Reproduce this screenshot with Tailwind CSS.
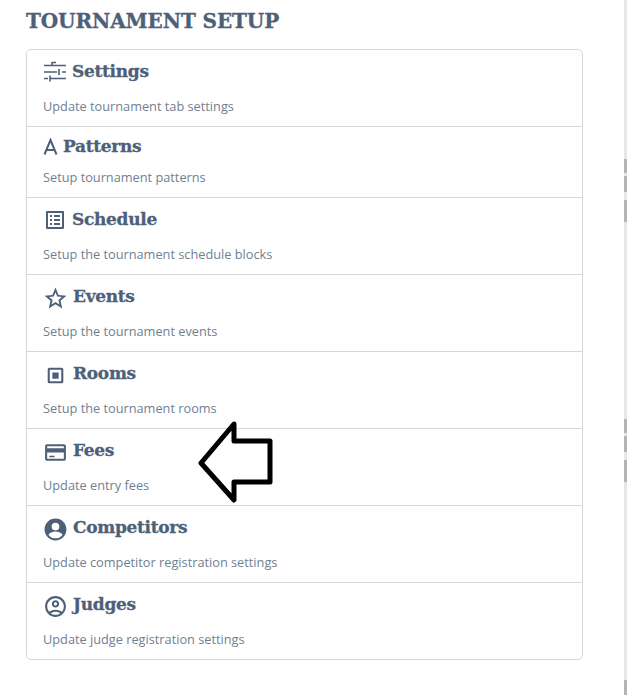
<!DOCTYPE html>
<html lang="en">
	<head>
		<meta charset="UTF-8" />
		<script src="https://cdn.jsdelivr.net/npm/@tailwindcss/browser@4"></script>
		<title>Tournament setup</title>
	</head>
	<body class="relative h-[695px] overflow-hidden bg-white font-['Open_Sans',sans-serif]">
		<!-- scrollbar strip on the right -->
		<div class="absolute right-0 top-0 h-full w-[3px] bg-[#e5e7e9]">
			<div class="absolute left-0 top-[159px] h-[14px] w-[3px] bg-[#b4b4b4]"></div>
			<div class="absolute left-0 top-[176px] h-[16px] w-[3px] bg-[#b4b4b4]"></div>
			<div class="absolute left-0 top-[200px] h-[22px] w-[3px] bg-[#b4b4b4]"></div>
			<div class="absolute left-0 top-[419px] h-[14px] w-[3px] bg-[#b4b4b4]"></div>
			<div class="absolute left-0 top-[436px] h-[16px] w-[3px] bg-[#b4b4b4]"></div>
			<div class="absolute left-0 top-[460px] h-[22px] w-[3px] bg-[#b4b4b4]"></div>
			<div class="absolute left-0 top-[680px] h-[15px] w-[3px] bg-[#b4b4b4]"></div>
		</div>

		<div class="pl-[26px] pt-[8px] w-[583px]">
			<h1 class="font-['DejaVu_Serif',serif] font-bold text-[20px] leading-[26px] tracking-[-0.1px] text-[#4d6078] [-webkit-text-stroke:0.3px]">TOURNAMENT SETUP</h1>

			<div class="mt-[15px] border border-[#d4d8de] rounded-[5px] text-[#4d6078]">
				<!-- Settings -->
				<div class="h-[77px] pl-[16px] pt-[9px] border-b border-[#d4d8de]">
					<div class="flex items-center gap-[5px] h-[26px]">
						<svg class="w-[24px] h-[24px]" viewBox="0 0 24 24" fill="none" stroke="currentColor" stroke-width="1.600"><path d="M1 5.500h22M9 2v4M9 2.500h4M1 12h13M16 9v6M19 12h4M1 18.500h4M7 15.500v6M7 18.500h16"/></svg>
						<span class="font-['DejaVu_Serif',serif] font-bold text-[17px] tracking-[-0.3px] [-webkit-text-stroke:0.3px]">Settings</span>
					</div>
					<p class="mt-[12px] text-[12.75px] leading-[18px] text-[#6f7f92]">Update tournament tab settings</p>
				</div>
				<!-- Patterns -->
				<div class="h-[71px] pl-[16px] pt-[7px] border-b border-[#d4d8de]">
					<div class="flex items-center gap-[5px] h-[26px]">
						<svg class="w-[15px] h-[18px]" viewBox="0 0 15 18" fill="none" stroke="currentColor" stroke-width="2"><path d="M1.500 16.500 7.500 2l6 14.500M3.500 12h8"/></svg>
						<span class="font-['DejaVu_Serif',serif] font-bold text-[17px] tracking-[-0.3px] [-webkit-text-stroke:0.3px]">Patterns</span>
					</div>
					<p class="mt-[8px] text-[12.75px] leading-[18px] text-[#6f7f92]">Setup tournament patterns</p>
				</div>
				<!-- Schedule -->
				<div class="h-[77px] pl-[16px] pt-[9px] border-b border-[#d4d8de]">
					<div class="flex items-center gap-[5px] h-[26px]">
						<svg class="w-[24px] h-[24px]" viewBox="0 0 24 24" fill="currentColor"><path d="M19 5v14H5V5h14m1.100-2H3.900c-.5 0-.9.4-.9.9v16.200c0 .4.4.9.9.9h16.200c.4 0 .9-.5.9-.9V3.900c0-.5-.5-.9-.9-.9zM11 7h6v2h-6V7zm0 4h6v2h-6v-2zm0 4h6v2h-6zM7 7h2v2H7zm0 4h2v2H7zm0 4h2v2H7z"/></svg>
						<span class="font-['DejaVu_Serif',serif] font-bold text-[17px] tracking-[-0.3px] [-webkit-text-stroke:0.3px]">Schedule</span>
					</div>
					<p class="mt-[12px] text-[12.75px] leading-[18px] text-[#6f7f92]">Setup the tournament schedule blocks</p>
				</div>
				<!-- Events -->
				<div class="h-[77px] pl-[16px] pt-[9px] border-b border-[#d4d8de]">
					<div class="flex items-center gap-[5px] h-[26px]">
						<svg class="w-[25px] h-[25px] mt-[2px]" viewBox="0 0 24 24" fill="currentColor"><path d="M22.500 9.240l-7.500-.66L12 1.500 9 8.580l-7.500.66 5.700 4.930L5.500 21.500 12 17.600l6.500 3.900-1.700-7.330 5.700-4.930zM12 15.400l-3.760 2.270 1-4.280-3.320-2.880 4.380-.38L12 6.100l1.710 4.040 4.380.38-3.320 2.880 1 4.280L12 15.400z"/></svg>
						<span class="font-['DejaVu_Serif',serif] font-bold text-[17px] tracking-[-0.3px] [-webkit-text-stroke:0.3px]">Events</span>
					</div>
					<p class="mt-[12px] text-[12.75px] leading-[18px] text-[#6f7f92]">Setup the tournament events</p>
				</div>
				<!-- Rooms -->
				<div class="h-[77px] pl-[16px] pt-[9px] border-b border-[#d4d8de]">
					<div class="flex items-center gap-[5px] h-[26px]">
						<svg class="w-[25px] h-[25px] mt-[2px]" viewBox="0 0 24 24" fill="currentColor"><path d="M6 4.500h12a1.500 1.500 0 0 1 1.500 1.500v12a1.500 1.500 0 0 1-1.500 1.500H6A1.500 1.500 0 0 1 4.500 18V6A1.500 1.500 0 0 1 6 4.500zm.5 2v11h11v-11h-11zm2.500 2.500h6v6H9V9z"/></svg>
						<span class="font-['DejaVu_Serif',serif] font-bold text-[17px] tracking-[-0.3px] [-webkit-text-stroke:0.3px]">Rooms</span>
					</div>
					<p class="mt-[12px] text-[12.75px] leading-[18px] text-[#6f7f92]">Setup the tournament rooms</p>
				</div>
				<!-- Fees -->
				<div class="h-[77px] pl-[16px] pt-[9px] border-b border-[#d4d8de]">
					<div class="flex items-center gap-[5px] h-[26px]">
						<svg class="w-[25px] h-[25px] mt-[2px]" viewBox="0 0 24 24" fill="currentColor"><path d="M20 4H4c-1.110 0-1.990.89-1.990 2L2 18c0 1.110.89 2 2 2h16c1.110 0 2-.89 2-2V6c0-1.110-.89-2-2-2zm0 14H4v-6h16v6zm0-10H4V6h16v2zM6 15h5v1.500H6z"/></svg>
						<span class="font-['DejaVu_Serif',serif] font-bold text-[17px] tracking-[-0.3px] [-webkit-text-stroke:0.3px]">Fees</span>
					</div>
					<p class="mt-[12px] text-[12.75px] leading-[18px] text-[#6f7f92]">Update entry fees</p>
				</div>
				<!-- Competitors -->
				<div class="h-[77px] pl-[16px] pt-[9px] border-b border-[#d4d8de]">
					<div class="flex items-center gap-[5px] h-[26px]">
						<svg class="w-[25px] h-[25px] mt-[2px]" viewBox="0 0 24 24" fill="currentColor"><path d="M12 1.500C6.200 1.500 1.500 6.200 1.500 12S6.200 22.500 12 22.500 22.500 17.800 22.500 12 17.800 1.500 12 1.500zm0 4a3.700 3.700 0 1 1 0 7.400 3.700 3.700 0 0 1 0-7.400zm0 15c-2.800 0-5.300-1.300-6.800-3.500C6.500 15 9.900 14 12 14s5.500 1 6.800 3c-1.500 2.200-4 3.500-6.800 3.500z"/></svg>
						<span class="font-['DejaVu_Serif',serif] font-bold text-[17px] tracking-[-0.3px] [-webkit-text-stroke:0.3px]">Competitors</span>
					</div>
					<p class="mt-[12px] text-[12.75px] leading-[18px] text-[#6f7f92]">Update competitor registration settings</p>
				</div>
				<!-- Judges -->
				<div class="h-[76px] pl-[16px] pt-[9px]">
					<div class="flex items-center gap-[5px] h-[26px]">
						<svg class="w-[25px] h-[25px] mt-[2px]" viewBox="0 0 24 24" fill="currentColor"><path d="M12 2C6.480 2 2 6.480 2 12s4.480 10 10 10 10-4.480 10-10S17.520 2 12 2zM7.350 18.500C8.660 17.560 10.260 17 12 17s3.340.56 4.650 1.500C15.340 19.440 13.740 20 12 20s-3.340-.56-4.650-1.500zm10.790-1.380C16.450 15.800 14.320 15 12 15s-4.450.8-6.140 2.120A7.960 7.960 0 0 1 4 12c0-4.420 3.580-8 8-8s8 3.580 8 8c0 1.950-.7 3.730-1.860 5.120zM12 6c-1.930 0-3.500 1.570-3.500 3.500S10.070 13 12 13s3.500-1.570 3.500-3.500S13.930 6 12 6zm0 5c-.83 0-1.500-.67-1.500-1.500S11.170 8 12 8s1.500.67 1.500 1.500S12.830 11 12 11z"/></svg>
						<span class="font-['DejaVu_Serif',serif] font-bold text-[17px] tracking-[-0.3px] [-webkit-text-stroke:0.3px]">Judges</span>
					</div>
					<p class="mt-[12px] text-[12.75px] leading-[18px] text-[#6f7f92]">Update judge registration settings</p>
				</div>
			</div>
		</div>

		<!-- hand-drawn arrow over the list -->
		<svg class="absolute left-[198px] top-[420px] w-[76px] h-[84px]" viewBox="0 0 76 84" fill="white" stroke="black" stroke-width="5" stroke-linejoin="round"><path d="M36 4 3 43l33 37V62h36V21H36z"/></svg>
	</body>
</html>
